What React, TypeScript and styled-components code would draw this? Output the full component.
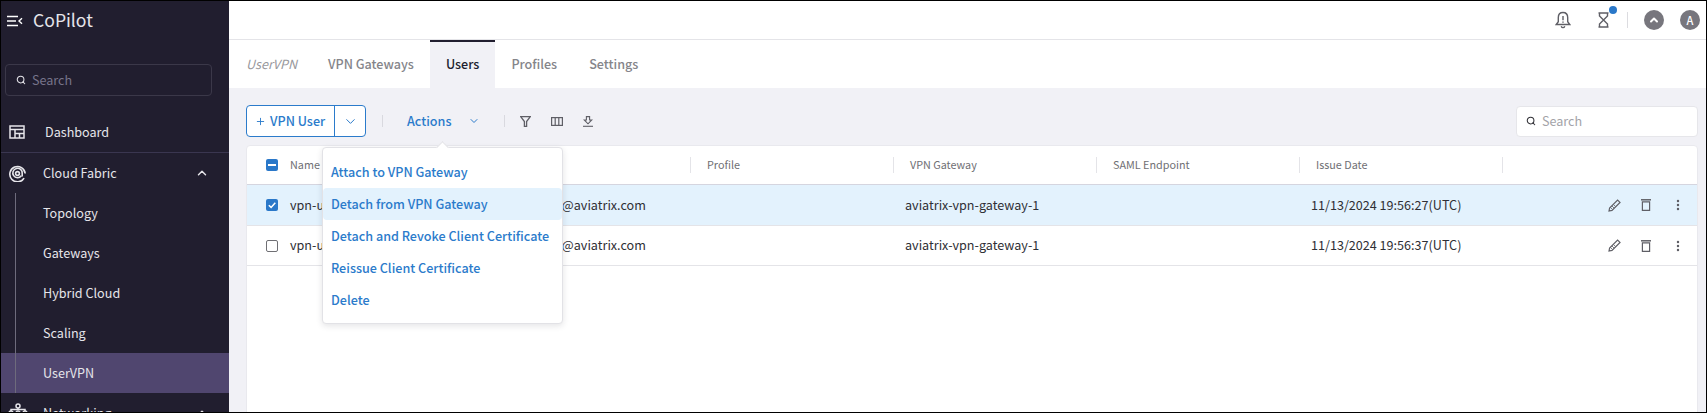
import React from 'react';
import styled, { createGlobalStyle } from 'styled-components';
import { ChevronDown, ChevronUp, Plus, Search, MoreVertical } from 'lucide-react';

const GlobalStyle = createGlobalStyle`
  html, body {
    margin: 0;
    padding: 0;
    height: 100%;
    overflow: hidden;
    background: #fff;
  }
  * { box-sizing: border-box; }
  body {
    font-family: "Noto Sans CJK SC", "Open Sans", sans-serif;
    font-size: 12.6px;
  }
`;

const Page = styled.div`
  display: flex;
  width: 1707px;
  height: 413px;
  border: 1px solid #000;
  overflow: hidden;
`;

// the CJK font sits low in its line box, this lifts a label back to centre
const Label = styled.span`
  margin-bottom: 2px;
  white-space: nowrap;
`;

const Sidebar = styled.aside`
  flex: 0 0 228px;
  background: #211e2f;
  color: #e6e5ea;
  overflow: hidden;
`;

const Brand = styled.div`
  display: flex;
  align-items: center;
  gap: 10px;
  height: 39px;
  padding-left: 6px;
  font-size: 17.6px;
  line-height: 39px;
`;

const SideSearch = styled.div`
  display: flex;
  align-items: center;
  gap: 6px;
  height: 32px;
  margin: 24px 17px 0 4px;
  padding-left: 10px;
  border: 1px solid #3b3849;
  border-radius: 4px;
  color: #77748a;
`;

const SideRow = styled.div`
  display: flex;
  align-items: center;
  height: 40px;
  padding-left: 8px;
  padding-right: 20px;
`;

const DashRow = styled(SideRow)`
  margin-top: 16px;
  height: 41px;
  gap: 20px;
  border-bottom: 1px solid #3a3650;
`;

const GroupRow = styled(SideRow)`
  justify-content: space-between;
`;

const GroupLabel = styled.span`
  display: flex;
  align-items: center;
  gap: 17px;
`;

const NetworkGlyph = styled.span`
  display: flex;
  margin: -4px -1.5px 0 -1.5px;
`;

const SubList = styled.div`
  position: relative;
`;

const SubRail = styled.div`
  position: absolute;
  left: 14px;
  top: 0;
  bottom: 0;
  width: 1px;
  background: #6e6b7c;
`;

const SubItem = styled.div<{ $active?: boolean }>`
  display: flex;
  align-items: center;
  height: 40px;
  padding: 0 0 2px 42px;
  background: ${(p) => (p.$active ? '#50466f' : 'transparent')};
`;

const Main = styled.main`
  flex: 1;
  display: flex;
  flex-direction: column;
  min-width: 0;
  background: #f1f1f6;
`;

const TopBar = styled.header`
  display: flex;
  align-items: center;
  justify-content: flex-end;
  gap: 20px;
  height: 39px;
  flex: 0 0 39px;
  background: #fff;
  border-bottom: 1px solid #e4e4e8;
  padding-right: 6px;
`;

const TopIcon = styled.span`
  position: relative;
  display: flex;
  width: 20px;
  height: 22px;
  align-items: center;
  justify-content: center;
`;

const BlueDot = styled.span`
  position: absolute;
  top: -3px;
  right: -4px;
  width: 8px;
  height: 8px;
  border-radius: 50%;
  background: #2a78c9;
`;

const AccountGroup = styled.div`
  display: flex;
  align-items: center;
  gap: 16px;
  margin-left: -6px;
`;

const TopDivider = styled.span`
  width: 1px;
  height: 16px;
  background: #dcdce0;
`;

const Avatar = styled.span`
  display: flex;
  align-items: center;
  justify-content: center;
  width: 20px;
  height: 20px;
  border-radius: 50%;
  background: #77767d;
  color: #fff;
  font-size: 11px;
  font-weight: 500;
`;

const Tabs = styled.nav`
  display: flex;
  align-items: stretch;
  flex: 0 0 48px;
  background: #fff;
  padding-left: 17px;
  font-weight: 500;
  color: #85858a;
`;

const TabTitle = styled.span`
  display: flex;
  align-items: center;
  width: 66px;
  padding-bottom: 2px;
  font-style: italic;
  font-weight: 400;
  color: #98989c;
`;

const Tab = styled.span<{ $active?: boolean }>`
  display: flex;
  align-items: center;
  padding: 0 16px 2px;
  ${(p) =>
    p.$active
      ? 'background: #f1f1f6; color: #211e2f; box-shadow: inset 0 2px 0 #211e2f;'
      : ''}
`;

const Content = styled.section`
  flex: 1;
  position: relative;
  min-height: 0;
  padding: 17px 8px 0 17px;
`;

const Toolbar = styled.div`
  display: flex;
  align-items: center;
  height: 32px;
`;

const SplitButton = styled.div`
  display: flex;
  flex: 0 0 120px;
  height: 32px;
  border: 1px solid #2b7bcb;
  border-radius: 4px;
  color: #2b7bcb;
  font-weight: 500;
  background: #fff;
`;

const SplitMain = styled.span`
  display: flex;
  align-items: center;
  gap: 4px;
  width: 88px;
  padding-left: 8px;
  border-right: 1px solid #2b7bcb;
`;

const SplitCaret = styled.span`
  flex: 1;
  display: flex;
  align-items: center;
  justify-content: center;
`;

const ToolDivider = styled.span`
  width: 1px;
  height: 12px;
  background: #d9d9df;
`;

const LeadDivider = styled(ToolDivider)`
  margin-left: 16px;
`;

const ActionsButton = styled.span`
  display: flex;
  align-items: center;
  width: 121px;
  padding-left: 24px;
  color: #2b7bcb;
  font-weight: 500;
  gap: 17px;
`;

const ToolIcons = styled.div`
  display: flex;
  align-items: center;
  gap: 20px;
  margin-left: 15px;
  color: #5f5f66;
`;

const ToolSearch = styled.div`
  display: flex;
  align-items: center;
  gap: 6px;
  height: 31px;
  width: 182px;
  margin-left: auto;
  padding-left: 9px;
  background: #fff;
  border: 1px solid #e6e6ea;
  border-radius: 4px;
  color: #a3a3a8;
`;

const Table = styled.div`
  margin-top: 8px;
  height: 300px;
  background: #fff;
  border: 1px solid #e9e9ee;
  border-radius: 4px 4px 0 0;
`;

const gridColumns = '43px 197px 203px 203px 203px 203px 203px 1fr';

const HeadRow = styled.div`
  display: grid;
  grid-template-columns: ${gridColumns};
  align-items: center;
  height: 39px;
  border-bottom: 1px solid #d5d5df;
  font-size: 10.8px;
  color: #6f6f74;
`;

const HeadCell = styled.span<{ $rule?: boolean }>`
  display: flex;
  align-items: center;
  height: 16px;
  padding: 0 0 2px 16px;
  ${(p) => (p.$rule ? 'border-left: 1px solid #e4e4e8;' : '')}
`;

const CheckCell = styled.span`
  display: flex;
  align-items: center;
  padding-left: 19px;
`;

const BodyRow = styled.div<{ $selected?: boolean }>`
  display: grid;
  grid-template-columns: ${gridColumns};
  align-items: center;
  height: 40px;
  border-bottom: 1px solid #e4e4e8;
  color: #2f2f35;
  background: ${(p) => (p.$selected ? '#e3f2fd' : '#fff')};

  &:nth-child(2) {
    height: 41px;
  }
`;

const BodyCell = styled(Label)`
  padding-left: 12px;
`;

const RowActions = styled.span`
  display: flex;
  align-items: center;
  justify-content: flex-end;
  gap: 20px;
  padding-right: 12px;
  color: #5f5f66;
`;

const CheckBox = styled.span<{ $on?: boolean }>`
  display: flex;
  align-items: center;
  justify-content: center;
  width: 12px;
  height: 12px;
  border-radius: 2px;
  background: ${(p) => (p.$on ? '#2a78c9' : '#fff')};
  border: ${(p) => (p.$on ? 'none' : '1px solid #6f6f74')};
`;

const Menu = styled.div`
  position: absolute;
  left: 93px;
  top: 59px;
  width: 241px;
  height: 177px;
  padding-top: 8px;
  background: #fff;
  border: 1px solid #e2e2e6;
  border-radius: 4px;
  box-shadow: 0 2px 6px rgba(30, 30, 50, 0.12);
  color: #2b7bcb;
  font-weight: 500;
  z-index: 2;
`;

const MenuArrow = styled.span`
  position: absolute;
  left: 115px;
  top: -5px;
  width: 9px;
  height: 9px;
  background: #fff;
  border-top: 1px solid #e2e2e6;
  border-left: 1px solid #e2e2e6;
  transform: rotate(45deg);
`;

const MenuItem = styled.div<{ $hover?: boolean }>`
  display: flex;
  align-items: center;
  height: 32px;
  padding: 0 0 2px 8px;
  border-radius: 4px;
  white-space: nowrap;
  background: ${(p) => (p.$hover ? '#e3f2fd' : 'transparent')};
`;

const CollapseIcon = () => (
  <svg width="16" height="12" viewBox="0 0 16 12" fill="none" stroke="#fff" strokeWidth="1.4">
    <path d="M0 1.500h11M0 6h9M0 10.500h11" />
    <path d="M15 3.200 12 6l3 2.800" />
  </svg>
);

const DashboardIcon = () => (
  <svg width="16" height="14" viewBox="0 0 16 14" fill="none" stroke="#e6e5ea" strokeWidth="1.5">
    <rect x="1" y="1" width="14" height="12" />
    <path d="M1 4.600h14M6 4.600V13M6 8.400h9M10.500 8.400V13" />
  </svg>
);

const FabricIcon = () => (
  <svg width="17" height="17" viewBox="0 0 17 17" fill="none" stroke="#e6e5ea" strokeWidth="1.6">
    <path d="M15.100 13.200A7.700 7.700 0 1 1 16.200 8.500" />
    <path d="M12.300 10.800A4.700 4.700 0 1 1 13.200 8.500v3" />
    <circle cx="8.500" cy="8.500" r="1.900" />
  </svg>
);

const NetworkIcon = () => (
  <svg width="20" height="16" viewBox="0 0 20 16" fill="none" stroke="#e6e5ea" strokeWidth="1.5">
    <circle cx="10" cy="3" r="2" />
    <path d="M10 5v2M3 8V6.500h14V8" />
    <circle cx="3" cy="10" r="2" />
    <circle cx="10" cy="10" r="2" />
    <circle cx="17" cy="10" r="2" />
  </svg>
);

const BellIcon = () => (
  <svg width="16" height="18" viewBox="0 0 16 18" fill="none" stroke="#5f5f66" strokeWidth="1.4">
    <path d="M8 1.500c-3 0-4.700 2.200-4.700 5v4.200L1.200 13.500h13.600l-2.100-2.800V6.500c0-2.800-1.700-5-4.700-5Z" />
    <path d="M6.200 15.200c.4 1 1 1.400 1.800 1.400s1.400-.4 1.800-1.400" />
    <path d="M8 5v4.200M8 10.400v1.300" />
  </svg>
);

const HourglassIcon = () => (
  <svg width="11" height="16" viewBox="0 0 11 16" fill="none" stroke="#5f5f66" strokeWidth="1.4">
    <path d="M0.500 1h10M0.500 15h10M1.500 1v3l4 4 4-4V1M1.500 15v-3l4-4 4 4v3" />
  </svg>
);

const FilterIcon = () => (
  <svg width="11" height="11" viewBox="0 0 11 11" fill="none" stroke="#5f5f66" strokeWidth="1.3">
    <path d="M0.700 0.700h9.600L6.600 5.500v4.800H4.400V5.500Z" />
  </svg>
);

const ColumnsIcon = () => (
  <svg width="12" height="9" viewBox="0 0 12 9" fill="none" stroke="#5f5f66" strokeWidth="1.2">
    <rect x="0.600" y="0.600" width="10.800" height="7.800" />
    <path d="M4.200 0.600v7.800M7.800 0.600v7.800" />
  </svg>
);

const ExportIcon = () => (
  <svg width="10" height="11" viewBox="0 0 10 11" fill="none" stroke="#5f5f66" strokeWidth="1.1">
    <path d="M3.400 0.600h3.200v3.400h2.200L5 7.800 1.200 4h2.200Z" />
    <path d="M0 10.300h10" />
  </svg>
);

const PencilIcon = () => (
  <svg width="13" height="13" viewBox="0 0 13 13" fill="none" stroke="#5f5f66" strokeWidth="1.2">
    <path d="M1 12l.6-3L9.600 1l2.400 2.400-8 8Z" />
    <path d="M2.500 8.500 4.500 10.500M4 7l2 2M5.500 5.500l2 2" strokeWidth="0.8" />
  </svg>
);

const TrashIcon = () => (
  <svg width="10" height="12" viewBox="0 0 10 12" fill="none" stroke="#5f5f66" strokeWidth="1.2">
    <path d="M0 0.800h10" strokeWidth="1.5" />
    <path d="M1.400 2.800h7.200v8.500H1.400Z" />
  </svg>
);

const CheckMark = () => (
  <svg width="10" height="10" viewBox="0 0 10 10" fill="none" stroke="#fff" strokeWidth="1.5">
    <path d="M1.800 5.200 4.100 7.400 8.300 2.800" />
  </svg>
);

const MinusMark = () => (
  <svg width="8" height="2" viewBox="0 0 8 2">
    <rect width="8" height="2" fill="#fff" />
  </svg>
);

const subItems = ['Topology', 'Gateways', 'Hybrid Cloud', 'Scaling', 'UserVPN'];
const menuItems = [
  'Attach to VPN Gateway',
  'Detach from VPN Gateway',
  'Detach and Revoke Client Certificate',
  'Reissue Client Certificate',
  'Delete',
];
const users = [
  { name: 'vpn-user-1', date: '11/13/2024 19:56:27(UTC)', selected: true },
  { name: 'vpn-user-2', date: '11/13/2024 19:56:37(UTC)', selected: false },
];

const App: React.FC = () => {
  return (
    <>
      <GlobalStyle />
      <Page>
        <Sidebar>
          <Brand>
            <CollapseIcon />
            <Label>CoPilot</Label>
          </Brand>
          <SideSearch>
            <Search size={10} strokeWidth={2.5} color="#e6e5ea" />
            <Label>Search</Label>
          </SideSearch>
          <DashRow>
            <DashboardIcon />
            <Label>Dashboard</Label>
          </DashRow>
          <GroupRow>
            <GroupLabel>
              <FabricIcon />
              <Label>Cloud Fabric</Label>
            </GroupLabel>
            <ChevronUp size={14} strokeWidth={2.5} />
          </GroupRow>
          <SubList>
            <SubRail />
            {subItems.map((item) => (
              <SubItem key={item} $active={item === 'UserVPN'}>
                {item}
              </SubItem>
            ))}
          </SubList>
          <GroupRow>
            <GroupLabel>
              <NetworkGlyph>
                <NetworkIcon />
              </NetworkGlyph>
              <Label>Networking</Label>
            </GroupLabel>
            <ChevronUp size={14} strokeWidth={2.5} />
          </GroupRow>
        </Sidebar>
        <Main>
          <TopBar>
            <TopIcon>
              <BellIcon />
            </TopIcon>
            <TopIcon>
              <HourglassIcon />
              <BlueDot />
            </TopIcon>
            <AccountGroup>
              <TopDivider />
              <Avatar>
                <ChevronUp size={12} strokeWidth={4} />
              </Avatar>
              <Avatar>A</Avatar>
            </AccountGroup>
          </TopBar>
          <Tabs>
            <TabTitle>UserVPN</TabTitle>
            <Tab>VPN Gateways</Tab>
            <Tab $active>Users</Tab>
            <Tab>Profiles</Tab>
            <Tab>Settings</Tab>
          </Tabs>
          <Content>
            <Toolbar>
              <SplitButton>
                <SplitMain>
                  <Plus size={11} strokeWidth={2} />
                  <Label>VPN User</Label>
                </SplitMain>
                <SplitCaret>
                  <ChevronDown size={15} strokeWidth={1.6} />
                </SplitCaret>
              </SplitButton>
              <LeadDivider />
              <ActionsButton>
                <Label>Actions</Label>
                <ChevronDown size={12} strokeWidth={2} />
              </ActionsButton>
              <ToolDivider />
              <ToolIcons>
                <FilterIcon />
                <ColumnsIcon />
                <ExportIcon />
              </ToolIcons>
              <ToolSearch>
                <Search size={10} strokeWidth={2.5} color="#2f2f35" />
                <Label>Search</Label>
              </ToolSearch>
            </Toolbar>
            <Table>
              <HeadRow>
                <CheckCell>
                  <CheckBox $on>
                    <MinusMark />
                  </CheckBox>
                </CheckCell>
                <Label>Name</Label>
                <HeadCell>Email</HeadCell>
                <HeadCell $rule>Profile</HeadCell>
                <HeadCell $rule>VPN Gateway</HeadCell>
                <HeadCell $rule>SAML Endpoint</HeadCell>
                <HeadCell $rule>Issue Date</HeadCell>
                <HeadCell $rule />
              </HeadRow>
              {users.map((user) => (
                <BodyRow key={user.name} $selected={user.selected}>
                  <CheckCell>
                    <CheckBox $on={user.selected}>{user.selected && <CheckMark />}</CheckBox>
                  </CheckCell>
                  <Label>{user.name}</Label>
                  <BodyCell>{user.name}@aviatrix.com</BodyCell>
                  <BodyCell />
                  <BodyCell>aviatrix-vpn-gateway-1</BodyCell>
                  <BodyCell />
                  <BodyCell>{user.date}</BodyCell>
                  <RowActions>
                    <PencilIcon />
                    <TrashIcon />
                    <MoreVertical size={14} strokeWidth={2.2} />
                  </RowActions>
                </BodyRow>
              ))}
            </Table>
            <Menu>
              <MenuArrow />
              {menuItems.map((item) => (
                <MenuItem key={item} $hover={item === 'Detach from VPN Gateway'}>
                  {item}
                </MenuItem>
              ))}
            </Menu>
          </Content>
        </Main>
      </Page>
    </>
  );
};

export default App;
